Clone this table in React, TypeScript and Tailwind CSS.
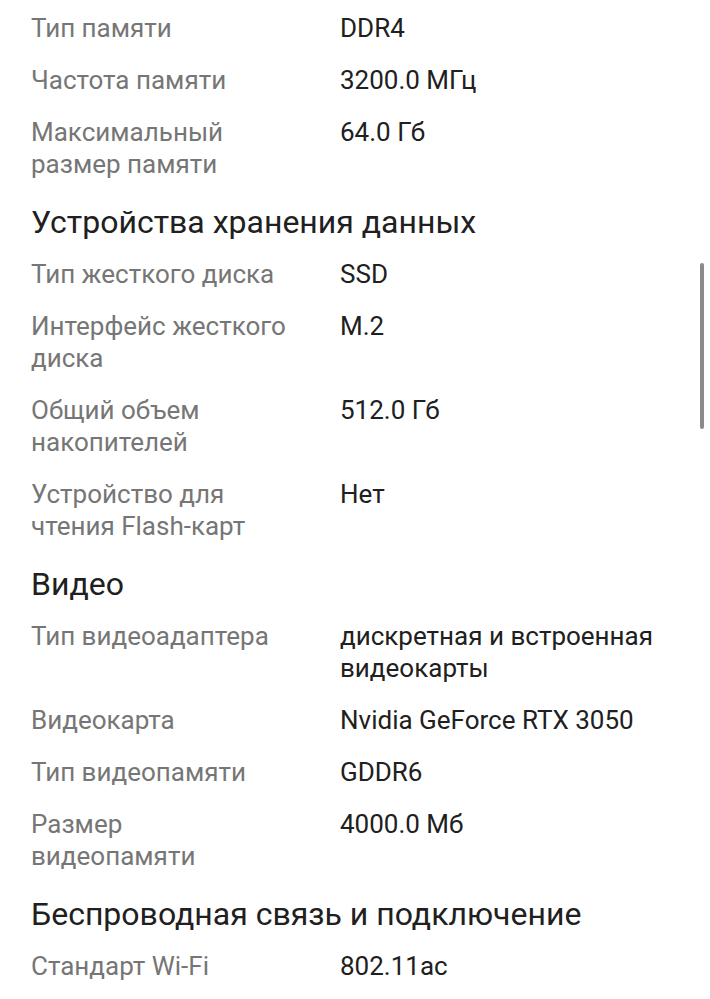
import React from "react";

type Row = { label: string; value: string };
type Section = { title?: string; rows: Row[] };

const sections: Section[] = [
  {
    rows: [
      { label: "Тип памяти", value: "DDR4" },
      { label: "Частота памяти", value: "3200.0 МГц" },
      { label: "Максимальный размер памяти", value: "64.0 Гб" },
    ],
  },
  {
    title: "Устройства хранения данных",
    rows: [
      { label: "Тип жесткого диска", value: "SSD" },
      { label: "Интерфейс жесткого диска", value: "M.2" },
      { label: "Общий объем накопителей", value: "512.0 Гб" },
      { label: "Устройство для чтения Flash-карт", value: "Нет" },
    ],
  },
  {
    title: "Видео",
    rows: [
      { label: "Тип видеоадаптера", value: "дискретная и встроенная видеокарты" },
      { label: "Видеокарта", value: "Nvidia GeForce RTX 3050" },
      { label: "Тип видеопамяти", value: "GDDR6" },
      { label: "Размер видеопамяти", value: "4000.0 Мб" },
    ],
  },
  {
    title: "Беспроводная связь и подключение",
    rows: [{ label: "Стандарт Wi-Fi", value: "802.11ac" }],
  },
];

export default function App() {
  return (
    <div
      className="relative h-[999px] w-[710px] overflow-hidden bg-white pl-[31px] pt-[12px]"
      style={{ fontFamily: "Roboto, 'Noto Sans', sans-serif" }}
    >
      {sections.map((s, i) => (
        <div key={i}>
          {s.title && (
            <h2 className="pt-[4px] pb-[18px] text-[32px] leading-[36px] text-[#202020]">
              {s.title}
            </h2>
          )}
          {s.rows.map((r) => (
            <div key={r.label} className="flex pb-[20px] text-[26px] leading-[32px]">
              <div className="w-[309px] shrink-0 pr-[51px] text-[#767676]">{r.label}</div>
              <div className="w-[345px] text-[#202020]">{r.value}</div>
            </div>
          ))}
        </div>
      ))}
      <div className="absolute left-[700px] top-[263px] h-[166px] w-[4px] rounded-full bg-[#8a8a8a]" />
    </div>
  );
}
